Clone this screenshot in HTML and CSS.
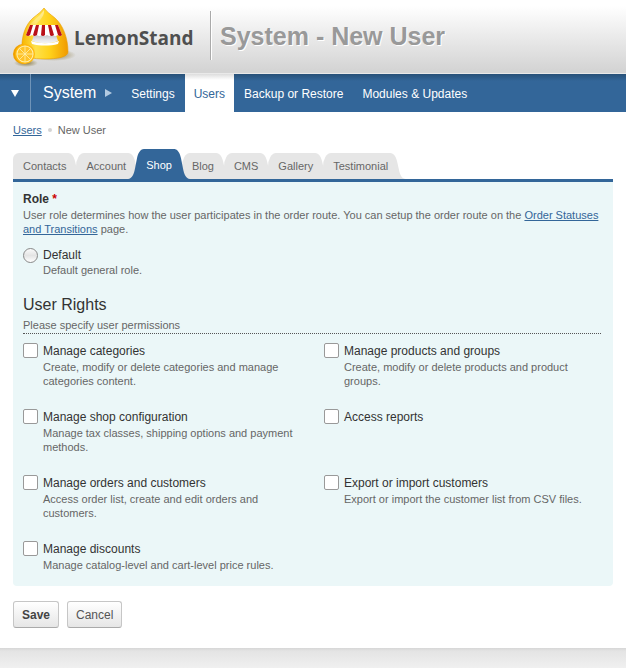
FILE: index.html
```html
<!DOCTYPE html>
<html lang="en">
<head>
<meta charset="utf-8">
<title>System - New User</title>
<link rel="stylesheet" href="styles.css">
</head>
<body>
<svg class="defs" width="0" height="0" aria-hidden="true">
  <symbol id="cap" viewBox="0 0 16 26" preserveAspectRatio="none"><path d="M0 0C4 0 6 4 7 8L9 17C10 22 12 26 16 26H0Z"/></symbol>
</svg>

<header class="header">
  <a class="brand" href="#">
    <svg class="logo" viewBox="0 0 64 62" width="64" height="62" aria-hidden="true">
      <defs>
        <linearGradient id="body" x1="0" x2="1"><stop offset="0" stop-color="#f7b500"/><stop offset=".3" stop-color="#ffe14a"/><stop offset=".6" stop-color="#ffd21c"/><stop offset="1" stop-color="#f09a00"/></linearGradient>
        <linearGradient id="shine" x1="0" x2="0" y1="0" y2="1"><stop offset="0" stop-color="#fff" stop-opacity=".5"/><stop offset="1" stop-color="#fff" stop-opacity="0"/></linearGradient>
        <linearGradient id="counter" x1="0" x2="0" y1="0" y2="1"><stop offset="0" stop-color="#c4c4c8"/><stop offset=".6" stop-color="#e6e6e9"/><stop offset="1" stop-color="#f4f4f6"/></linearGradient>
        <radialGradient id="shade"><stop offset="0" stop-color="#6b5200" stop-opacity=".7"/><stop offset="1" stop-color="#6b5200" stop-opacity="0"/></radialGradient>
      </defs>
      <ellipse cx="42" cy="48" rx="22" ry="6" fill="url(#shade)"/>
      <ellipse cx="14" cy="56" rx="12" ry="4" fill="url(#shade)"/>
      <path d="M10 45C9 30 13 18 21 11C26 7 29 5 32 1C35 5 38 7 43 11C51 18 56 31 56 45C56 50 45 52 33 52S10 50 10 45Z" fill="url(#body)" stroke="#e99d00" stroke-width=".6"/>
      <path d="M14 24C17 15 27 11 32 3C33 11 25 14 22 21L14 26Z" fill="url(#shine)"/>
      <path d="M22 28H44L46 34C39 37 28 37 20 34Z" fill="url(#counter)"/>
      <path d="M19 34C28 37 38 37 47 34L46 37C38 39 28 39 20 37Z" fill="#fff"/>
      <path d="M18 18H46L50 28Q48 30 46 28Q43 30 41 28Q38 30 35 28Q32 30 30 28Q27 30 25 28Q22 30 20 28Q17 30 14 28Z" fill="#fff"/>
      <g fill="#ba1018"><path d="M18 18H21L18 28Q16 30 14 28Z"/><path d="M24 18H27L25 28Q22 30 21 28Z"/><path d="M30 18H33L33 28Q31 30 29 28Z"/><path d="M36 18H39L42 28Q39 30 38 28Z"/><path d="M43 18H46L50 28Q48 30 46 28Z"/></g>
      <circle cx="11" cy="47" r="10" fill="#f0a000"/>
      <circle cx="13" cy="47" r="10" fill="#ffb90f"/>
      <circle cx="13" cy="47" r="8.600" fill="#fff0b0"/>
      <circle cx="13" cy="47" r="7.600" fill="#ffc32a"/>
      <path d="M13 39V55M5 47H21M7.500 41.500L18.500 52.500M18.500 41.500L7.500 52.500" stroke="#fff0b0" stroke-width=".8"/>
    </svg>
    <span class="wordmark">LemonStand</span>
  </a>
  <h1 class="title">System - New User</h1>
</header>

<nav class="nav">
  <button class="nav-toggle" type="button" aria-label="Open menu"><svg width="8" height="7" viewBox="0 0 8 7"><path d="M0 0H8L4 7Z" fill="#fff"/></svg></button>
  <a class="nav-section" href="#">System <svg width="7" height="8" viewBox="0 0 7 8" aria-hidden="true"><path d="M0 0L7 4L0 8Z" fill="#b3cbe2"/></svg></a>
  <a class="nav-link" href="#">Settings</a>
  <a class="nav-link current" href="#">Users</a>
  <a class="nav-link" href="#">Backup or Restore</a>
  <a class="nav-link" href="#">Modules &amp; Updates</a>
</nav>

<main class="main">
  <div class="crumbs"><a href="#">Users</a><span class="dot"></span><span>New User</span></div>

  <div class="tabs">
    <a class="tab" href="#">Contacts<svg class="cap-right"><use href="#cap"/></svg></a>
    <a class="tab" href="#">Account<svg class="cap-right"><use href="#cap"/></svg></a>
    <a class="tab active" href="#"><svg class="cap-left"><use href="#cap"/></svg>Shop<svg class="cap-right"><use href="#cap"/></svg></a>
    <a class="tab" href="#">Blog<svg class="cap-right"><use href="#cap"/></svg></a>
    <a class="tab" href="#">CMS<svg class="cap-right"><use href="#cap"/></svg></a>
    <a class="tab" href="#">Gallery<svg class="cap-right"><use href="#cap"/></svg></a>
    <a class="tab" href="#">Testimonial<svg class="cap-right"><use href="#cap"/></svg></a>
  </div>

  <form>
    <div class="panel">
      <h2 class="field-title">Role <span class="required">*</span></h2>
      <p class="note">User role determines how the user participates in the order route. You can setup the order route on the <a href="#">Order Statuses and Transitions</a> page.</p>
      <div class="option role">
        <input type="radio" id="role" name="role">
        <div><label for="role">Default</label><p class="note">Default general role.</p></div>
      </div>

      <div class="section-head">
        <h2 class="section-title">User Rights</h2>
        <p class="note">Please specify user permissions</p>
      </div>

      <div class="rights">
        <div class="option"><input type="checkbox" id="categories"><div><label for="categories">Manage categories</label><p class="note">Create, modify or delete categories and manage categories content.</p></div></div>
        <div class="option"><input type="checkbox" id="products"><div><label for="products">Manage products and groups</label><p class="note">Create, modify or delete products and product groups.</p></div></div>
        <div class="option"><input type="checkbox" id="config"><div><label for="config">Manage shop configuration</label><p class="note">Manage tax classes, shipping options and payment methods.</p></div></div>
        <div class="option"><input type="checkbox" id="reports"><div><label for="reports">Access reports</label></div></div>
        <div class="option"><input type="checkbox" id="orders"><div><label for="orders">Manage orders and customers</label><p class="note">Access order list, create and edit orders and customers.</p></div></div>
        <div class="option"><input type="checkbox" id="export"><div><label for="export">Export or import customers</label><p class="note">Export or import the customer list from CSV files.</p></div></div>
        <div class="option"><input type="checkbox" id="discounts"><div><label for="discounts">Manage discounts</label><p class="note">Manage catalog-level and cart-level price rules.</p></div></div>
      </div>
    </div>
    <div class="actions">
      <button class="btn primary" type="submit">Save</button>
      <button class="btn" type="button">Cancel</button>
    </div>
  </form>
</main>
<footer class="footer"></footer>
</body>
</html>
```
FILE: styles.css
```css
* { box-sizing: border-box; }

body {
  margin: 0;
  min-height: 100vh;
  display: flex;
  flex-direction: column;
  background: #fff;
  color: #333;
  font: 12px/14px "Liberation Sans", Arial, sans-serif;
}

h1, h2, p { margin: 0; }
.defs { position: absolute; }

.header {
  display: flex;
  align-items: center;
  height: 74px;
  padding: 0 12px;
  background: linear-gradient(#fff 8%, #d4d4d4 96%);
  border-bottom: 1px solid #e9e9e9;
}
.brand {
  display: flex;
  align-items: center;
  width: 198px;
  margin-top: 2px;
  color: #4f4f4f;
  text-decoration: none;
}
.logo { margin-right: -2px; }
.wordmark {
  font: bold 19px/28px "Open Sans", "Noto Sans", sans-serif;
}
.title {
  padding-left: 9px;
  border-left: 1px solid #aaa;
  box-shadow: inset 1px 0 #fff;
  color: #999;
  font-size: 25px;
  line-height: 47px;
  margin-top: -2px;
  padding-top: 2px;
  text-shadow: 1px 1px #fff;
  white-space: nowrap;
}

.nav {
  display: flex;
  gap: 1px;
  height: 38px;
  background: linear-gradient(#285178, #336699 7px);
}
.nav a { color: #fff; text-decoration: none; white-space: nowrap; }
.nav-toggle {
  display: flex;
  align-items: center;
  justify-content: center;
  width: 31px;
  padding: 0;
  border: 0;
  border-right: 1px solid #7094b8;
  background: none;
}
.nav .nav-section {
  display: flex;
  align-items: center;
  gap: 9px;
  padding: 0 9px 0 11px;
  font-size: 16px;
}
.nav .nav-link {
  padding: 0 9px;
  line-height: 40px;
}
.nav .current {
  background: linear-gradient(#ddd, #fff 6px);
  color: #336699;
}

.main { padding: 11px 13px 20px; }
a { color: #336699; }
.crumbs {
  display: flex;
  align-items: center;
  color: #666;
  font-size: 11px;
}
.dot {
  width: 4px;
  height: 4px;
  margin: 0 6px;
  border-radius: 50%;
  background: #d4d4d4;
}

.tabs {
  display: flex;
  align-items: flex-end;
  margin-top: 12px;
  border-bottom: 3px solid #336699;
}
.tab {
  position: relative;
  height: 26px;
  padding: 0 10px;
  border-radius: 8px 0 0 0 / 14px 0 0 0;
  background: linear-gradient(#e6e6e6, #e6e6e6) no-repeat 0 0 / calc(100% - 8px) 100%;
  color: #666;
  fill: #e6e6e6;
  font-size: 11px;
  line-height: 27px;
  text-decoration: none;
}
.tab:first-child { border-radius: 6px 0 0 0; }
.cap-right, .cap-left {
  position: absolute;
  bottom: 0;
  width: 16px;
  height: 100%;
}
.cap-right { right: -8px; }
.cap-left { left: -8px; transform: scaleX(-1); }
.tab.active {
  z-index: 1;
  height: 30px;
  border-radius: 0;
  background: linear-gradient(#336699, #336699) no-repeat 50% 0 / calc(100% - 15px) 100%;
  color: #fff;
  fill: #336699;
  line-height: 33px;
}

.panel {
  padding: 10px 12px 14px 10px;
  border-radius: 0 0 4px 4px;
  background: #ebf7f8;
}
.field-title { font-size: 12px; line-height: 14px; margin-bottom: 2px; }
.required { color: #c00; }
.note { color: #666; font-size: 11px; }
.option { display: flex; gap: 5px; }
.option label { display: block; }
.option input {
  appearance: none;
  flex: none;
  width: 15px;
  height: 15px;
  margin: -1px 0 0;
  border: 1px solid #999;
  border-radius: 2px;
  background: #fff;
}
.option input[type="radio"] {
  border-color: #888;
  border-radius: 50%;
  margin: 0;
  background: linear-gradient(#fafafa, #e4e4e4 50%, #fff);
}
.option .note { margin-top: 2px; }
.role { margin-top: 12px; }
.role .note { margin-top: 1px; }
.section-head {
  margin-top: 19px;
  padding-bottom: 1px;
  border-bottom: 1px dotted #555;
}
.section-title {
  margin-bottom: 4px;
  font-size: 16px;
  font-weight: normal;
  line-height: 18px;
}
.rights {
  display: grid;
  grid-template-columns: 1fr 1fr;
  gap: 22px 24px;
  margin-top: 10px;
}

.actions {
  display: flex;
  gap: 8px;
  margin-top: 15px;
}
.btn {
  height: 27px;
  padding: 0 8px;
  border: 1px solid #c6c6c6;
  border-bottom-color: #aaa;
  border-radius: 3px;
  background: linear-gradient(#fff, #e6e6e6);
  color: #555;
  font: 12px/24px "Liberation Sans", Arial, sans-serif;
}
.btn.primary { font-weight: bold; color: #444; }

.footer {
  flex: 1;
  min-height: 20px;
  background: linear-gradient(#d6d6d6, #e4e4e4 3px, #f0f0f0 20px);
}
```
